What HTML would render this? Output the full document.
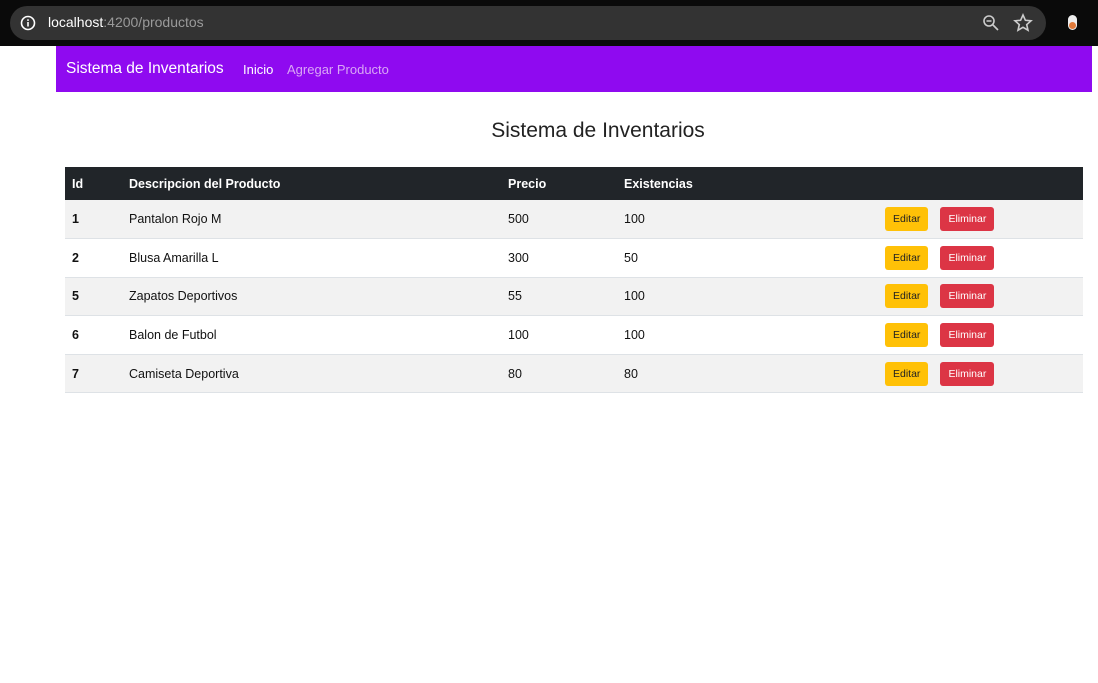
<!DOCTYPE html>
<html><head><style>
*{margin:0;padding:0;box-sizing:border-box}
body{width:1098px;height:683px;background:#fff;font-family:"Liberation Sans",sans-serif;position:relative;overflow:hidden}
.top{position:absolute;left:0;top:0;width:1098px;height:46px;background:#0a0a0a}
.pill{position:absolute;left:10px;top:6px;width:1036px;height:34px;border-radius:17px;background:#333}
.url{position:absolute;left:48px;top:14px;font-size:14px;color:#9a9a9a}
.url b{color:#fff;font-weight:normal}
.nav{position:absolute;left:56px;top:46px;width:1036px;height:46px;background:#8f0af0}
.nav span{position:absolute;top:16px;font-size:13px;white-space:nowrap}
h1{position:absolute;left:0;width:1196px;text-align:center;top:119px;font-size:21px;font-weight:normal;color:#222}
table{position:absolute;left:65px;top:167px;width:1018px;border-collapse:collapse;font-size:12.5px}
th{background:#212529;color:#fff;text-align:left;height:33px;padding-left:7px;font-weight:bold}
td{height:38.6px;padding-left:7px;border-bottom:1px solid #dee2e6;color:#111}
tr:nth-child(even) td{background:#f2f2f2}
.b{display:inline-block;height:24px;line-height:24px;font-size:10.5px;border-radius:3px;padding:0 8px}
.y{background:#ffc107;color:#222}.r{background:#dc3545;color:#fff;margin-left:12px}
</style></head><body>
<div class="top"><div class="pill"></div>
<svg style="position:absolute;left:20px;top:15px" width="16" height="16"><circle cx="8" cy="8" r="6.5" fill="none" stroke="#fff" stroke-width="1.6"/><rect x="7.2" y="7" width="1.6" height="4.5" fill="#fff"/><rect x="7.2" y="4.3" width="1.6" height="1.6" fill="#fff"/></svg>
<div class="url"><b>localhost</b>:4200/productos</div>
<svg style="position:absolute;left:982px;top:14px" width="18" height="18"><circle cx="7" cy="7" r="5" fill="none" stroke="#ccc" stroke-width="1.6"/><path d="M4.5 7h5M11 11l5 5" stroke="#ccc" stroke-width="1.6"/></svg>
<svg style="position:absolute;left:1013px;top:13px" width="20" height="20"><path d="M10 2l2.4 5.3 5.6.5-4.3 3.8 1.3 5.6L10 14.3 5 17.2l1.3-5.6L2 7.8l5.6-.5z" fill="none" stroke="#ccc" stroke-width="1.6"/></svg>
<div style="position:absolute;left:1068px;top:15px;width:9px;height:15px;border-radius:5px;background:#eee"><div style="position:absolute;left:1px;top:7px;width:7px;height:7px;border-radius:50%;background:#e07a3a"></div></div>
</div>
<div class="nav"><span style="left:10px;top:14px;font-size:15.5px;color:#fff">Sistema de Inventarios</span><span style="left:187px;color:#fff">Inicio</span><span style="left:231px;color:#d9a6f5">Agregar Producto</span></div>
<h1>Sistema de Inventarios</h1>
<table>
<tr><th style="width:57px">Id</th><th style="width:379px">Descripcion del Producto</th><th style="width:116px">Precio</th><th style="width:261px">Existencias</th><th></th></tr>
<tr><td><b>1</b></td><td>Pantalon Rojo M</td><td>500</td><td>100</td><td><span class="b y">Editar</span><span class="b r">Eliminar</span></td></tr>
<tr><td><b>2</b></td><td>Blusa Amarilla L</td><td>300</td><td>50</td><td><span class="b y">Editar</span><span class="b r">Eliminar</span></td></tr>
<tr><td><b>5</b></td><td>Zapatos Deportivos</td><td>55</td><td>100</td><td><span class="b y">Editar</span><span class="b r">Eliminar</span></td></tr>
<tr><td><b>6</b></td><td>Balon de Futbol</td><td>100</td><td>100</td><td><span class="b y">Editar</span><span class="b r">Eliminar</span></td></tr>
<tr><td><b>7</b></td><td>Camiseta Deportiva</td><td>80</td><td>80</td><td><span class="b y">Editar</span><span class="b r">Eliminar</span></td></tr>
</table>
</body></html>
